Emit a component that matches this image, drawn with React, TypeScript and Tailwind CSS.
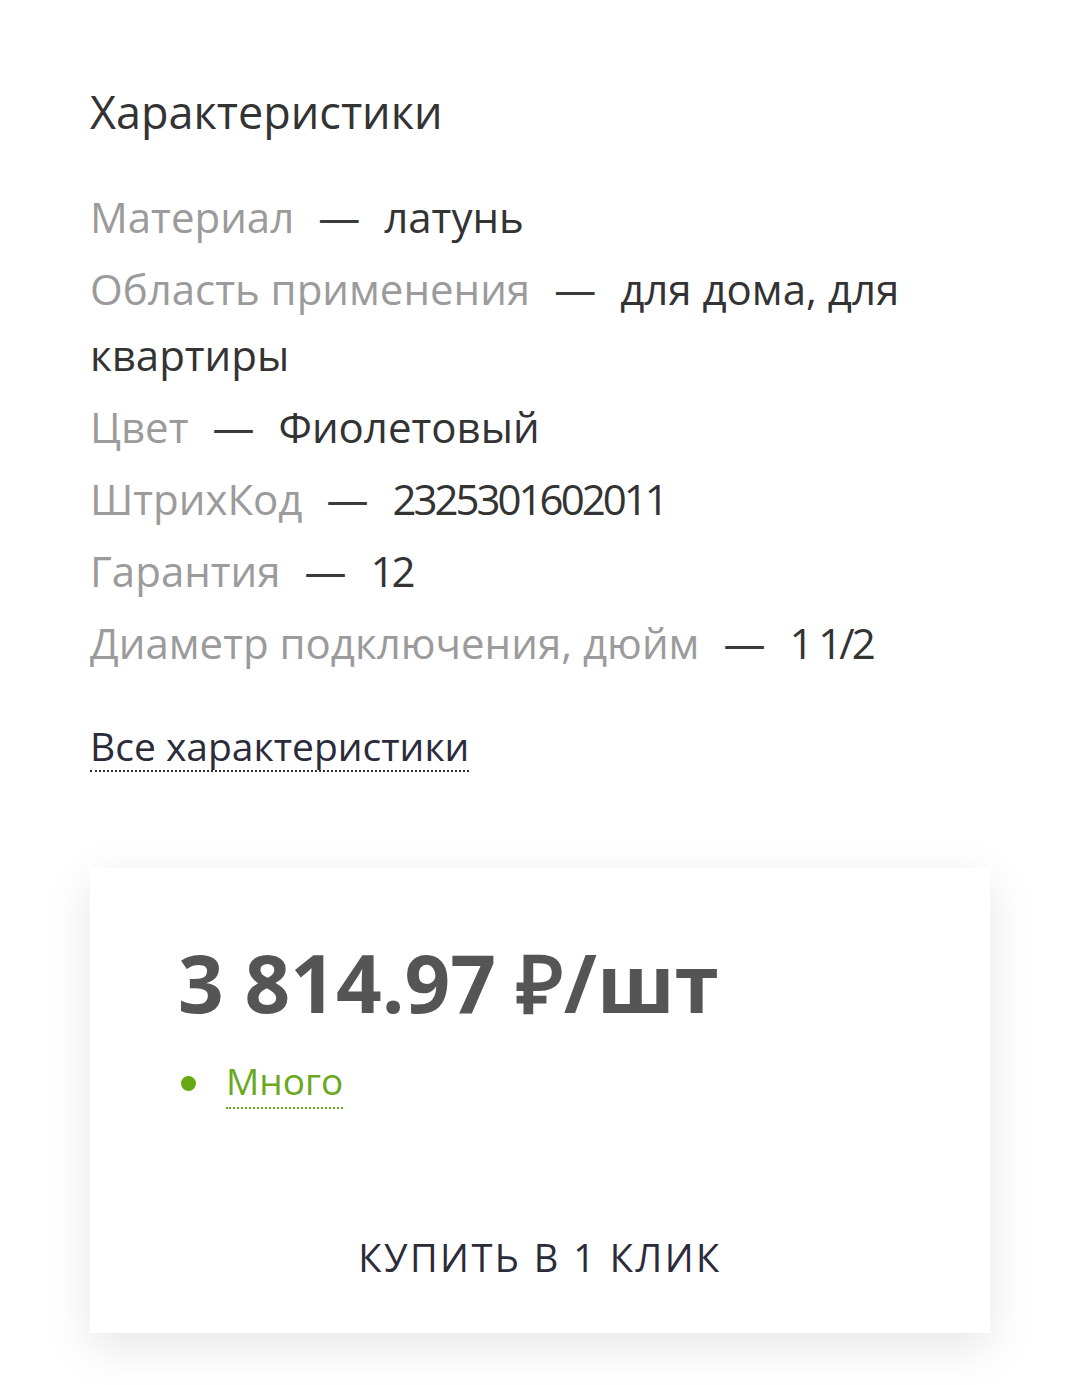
const specs: [string, string, boolean?][] = [
  ['Материал', 'латунь'],
  ['Область применения', 'для дома, для квартиры'],
  ['Цвет', 'Фиолетовый'],
  ['ШтрихКод', '2325301602011', true],
  ['Гарантия', '12', true],
  ['Диаметр подключения, дюйм', '1 1/2', true],
];

export default function App() {
  return (
    <div className="min-h-screen bg-white font-['Open_Sans',sans-serif]">
      <div className="w-[900px] ml-[90px] pt-[85px] pb-[53px]">
        {/* Specs */}
        <h2 className="text-[45px] leading-[1.2] text-[#333333] font-normal">Характеристики</h2>

        <div className="mt-[45px] flex flex-col gap-[6px]">
          {specs.map(([label, value, numeric]) => (
            <div key={label} className="text-[42px] leading-[66px]">
              <span className="text-[#9b9b9b]">{label}</span>
              <span className="mx-[24px] text-[#3a3a3a]">—</span>
              <span className={numeric ? 'text-[#333333] tracking-[-3px]' : 'text-[#333333]'}>{value}</span>
            </div>
          ))}
        </div>

        <div className="mt-[47px]">
          <a
            href="#"
            className="inline-block text-[39px] leading-[1.2] text-[#2b2b3a] border-b-2 border-dotted border-[#2b2b3a]"
          >
            Все характеристики
          </a>
        </div>

        {/* Price card */}
        <div className="mt-[96px] bg-white shadow-[0_14px_44px_rgba(0,0,0,0.1)] pt-[66px] pb-[52px] px-[88px]">
          <div className="text-[80px] leading-[1.2] font-bold text-[#555555]">3 814.97 ₽/шт</div>

          <div className="mt-[29px] flex items-center gap-[30px]">
            <span className="ml-[3px] w-[15px] h-[15px] rounded-full bg-[#66a812]" />
            <span className="text-[37px] leading-[1.2] text-[#6aa91e] pb-[4px] border-b-2 border-dotted border-[#6aa91e]">
              Много
            </span>
          </div>

          <button className="mt-[126px] block w-full text-center text-[38px] leading-[1.2] tracking-[2.5px] text-[#2b2b3a] uppercase">
            Купить в 1 клик
          </button>
        </div>
      </div>
    </div>
  );
}
